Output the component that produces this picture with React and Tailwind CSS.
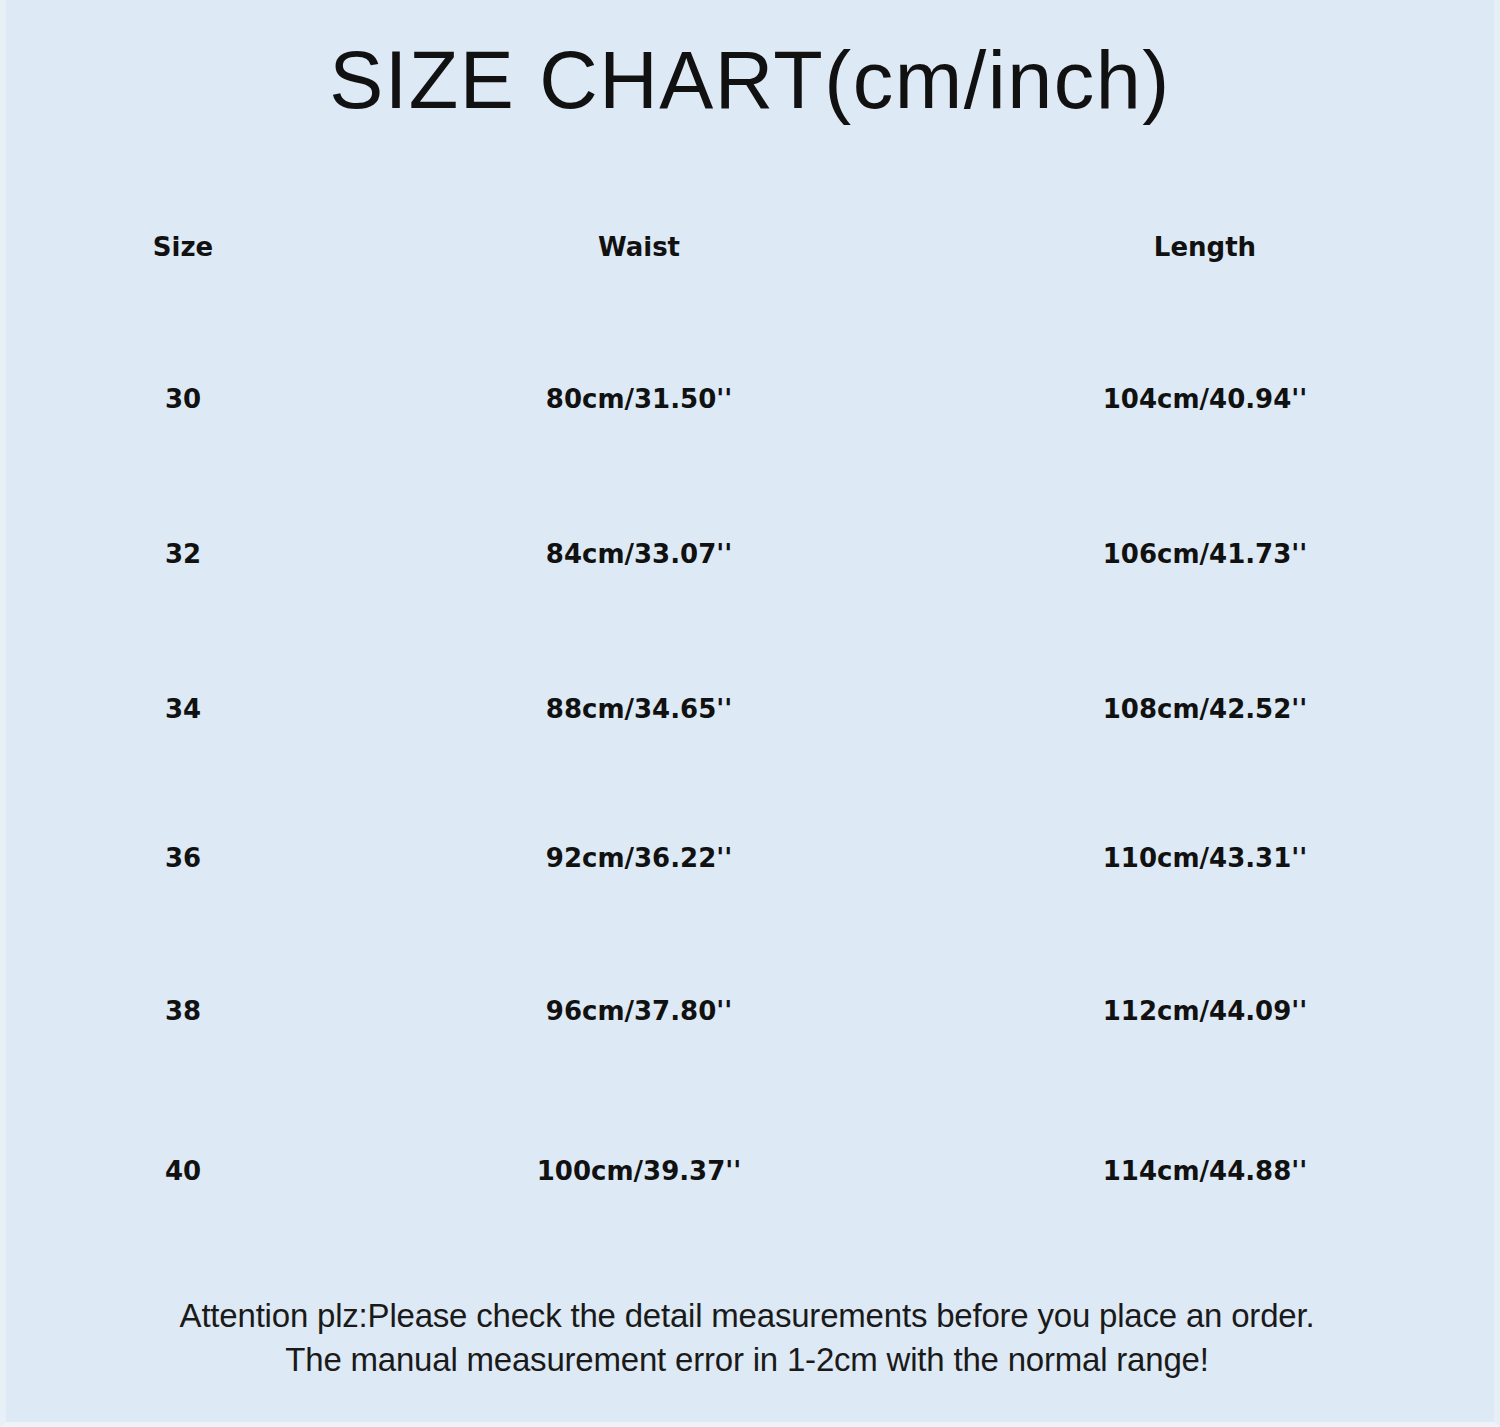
export default function App() {
  const rows = [
    { s: "30", w: "80cm/31.50''", l: "104cm/40.94''", mt: "mt-[112px]" },
    { s: "32", w: "84cm/33.07''", l: "106cm/41.73''", mt: "mt-[115px]" },
    { s: "34", w: "88cm/34.65''", l: "108cm/42.52''", mt: "mt-[115px]" },
    { s: "36", w: "92cm/36.22''", l: "110cm/43.31''", mt: "mt-[109px]" },
    { s: "38", w: "96cm/37.80''", l: "112cm/44.09''", mt: "mt-[113px]" },
    { s: "40", w: "100cm/39.37''", l: "114cm/44.88''", mt: "mt-[120px]" },
  ];
  const cell = "text-center leading-[40px] h-[40px]";
  return (
    <div className="w-[1500px] h-[1427px] bg-[#dde9f4] text-[#111] flex flex-col border-l-[6px] border-l-[#e8f0f7] border-r-[6px] border-r-[#e6eef6] border-b-[5px] border-b-[#eef3f8]">
      <h1 className="mt-[40px] text-center text-[81px] leading-none font-normal tracking-[1.5px] [font-family:'Liberation_Sans',sans-serif]">
        SIZE CHART(cm/inch)
      </h1>
      <div className="mt-[106px] -ml-[6px] [font-family:'DejaVu_Sans',sans-serif] font-bold text-[26px]">
        <div className="grid grid-cols-[366px_546px_586px]">
          <div className={cell}>Size</div>
          <div className={cell}>Waist</div>
          <div className={cell}>Length</div>
        </div>
        {rows.map((r) => (
          <div key={r.s} className={"grid grid-cols-[366px_546px_586px] " + r.mt}>
            <div className={cell}>{r.s}</div>
            <div className={cell}>{r.w}</div>
            <div className={cell}>{r.l}</div>
          </div>
        ))}
      </div>
      <div className="mt-[103px] -ml-[6px] text-center text-[33px] leading-[44px] tracking-[-0.2px] [font-family:'Liberation_Sans',sans-serif] text-[#1a1a1a]">
        <p>Attention plz:Please check the detail measurements before you place an order.</p>
        <p>The manual measurement error in 1-2cm with the normal range!</p>
      </div>
    </div>
  );
}
